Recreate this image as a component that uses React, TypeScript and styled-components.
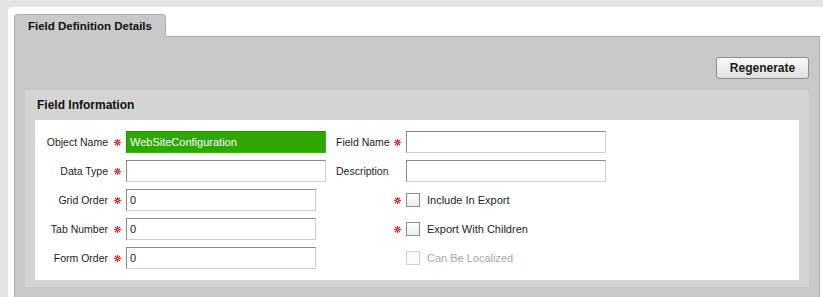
import React from 'react'
import styled, { createGlobalStyle } from 'styled-components'

const GlobalStyle = createGlobalStyle`
  html, body {
    margin: 0;
    padding: 0;
    height: 100%;
    background: #e4e4e4;
  }
  #root {
    height: 100%;
  }
  * {
    box-sizing: border-box;
  }
`

const Page = styled.div`
  height: 100%;
  padding: 7px 0 0 8px;
  font-family: 'Liberation Sans', Arial, sans-serif;
  font-size: 11px;
  color: #1e1e1e;
  overflow: hidden;
`

const Canvas = styled.div`
  height: 100%;
  background: #fff;
  border-top-left-radius: 4px;
  padding: 7px 3px 0 6px;
`

const TabBar = styled.div`
  display: flex;
  position: relative;
  z-index: 1;
  margin-bottom: -1px;
`

const Tab = styled.div`
  width: 152px;
  height: 23px;
  padding-left: 13px;
  line-height: 22px;
  background: #c9c9c9;
  border: 1px solid #a9b1ae;
  border-bottom: none;
  border-radius: 4px 4px 0 0;
  font-weight: bold;
  font-size: 11.5px;
  color: #111;
`

const Panel = styled.div`
  background: #c9c9c9;
  border: 1px solid #a9b1ae;
  border-bottom: none;
  padding: 20px 10px 10px;
`

const Toolbar = styled.div`
  display: flex;
  justify-content: flex-end;
  margin-bottom: 11px;
`

const Button = styled.button`
  width: 93px;
  height: 22px;
  padding: 0;
  border: 1px solid #8c8c8c;
  border-radius: 3px;
  background: linear-gradient(#fbfbfb, #dedede);
  font-family: inherit;
  font-weight: bold;
  font-size: 12px;
  color: #1a1a1a;
`

const Section = styled.div`
  background: #d4d4d4;
  border-radius: 4px 4px 0 0;
  padding: 0 10px 7px;
`

const SectionHeader = styled.div`
  height: 30px;
  line-height: 30px;
  padding-left: 2px;
  font-weight: bold;
  font-size: 12px;
  color: #111;
`

const Content = styled.div`
  background: #fff;
  height: 160px;
  padding: 11px 0;
  display: grid;
  grid-template-columns: 73px 18px 200px 62px 18px 200px;
  grid-auto-rows: 22px;
  row-gap: 7px;
  align-items: center;
`

const Label = styled.div<{ $align?: 'left' | 'right' }>`
  text-align: ${({ $align }) => $align ?? 'right'};
  padding-left: ${({ $align }) => ($align === 'left' ? '10px' : '0')};
  font-size: 10.5px;
  white-space: nowrap;
`

const StarCell = styled.div`
  display: flex;
  justify-content: center;
  align-items: center;
  height: 100%;
`

const Input = styled.input<{ $width?: number; $filled?: boolean }>`
  width: ${({ $width }) => $width ?? 200}px;
  height: 22px;
  padding: 0 3px;
  margin: 0;
  border: 1px solid;
  border-color: ${({ $filled }) =>
    $filled ? '#259000 #3cb810 #3cb810 #259000' : '#8a8a8a #cfcfcf #cfcfcf #8a8a8a'};
  background: ${({ $filled }) => ($filled ? '#2ea800' : '#fff')};
  color: ${({ $filled }) => ($filled ? '#fff' : '#1e1e1e')};
  font-family: inherit;
  font-size: 11px;
  outline: none;
`

const CheckRow = styled.label<{ $disabled?: boolean }>`
  display: flex;
  align-items: center;
  gap: 7px;
  color: ${({ $disabled }) => ($disabled ? '#a8a8a8' : '#1e1e1e')};
  white-space: nowrap;
`

const Box = styled.span<{ $disabled?: boolean }>`
  width: 14px;
  height: 14px;
  border: 1px solid ${({ $disabled }) => ($disabled ? '#d0d0d0' : '#8e8e8e')};
  background: ${({ $disabled }) =>
    $disabled ? '#fafafa' : 'linear-gradient(#ffffff, #ececec)'};
`

const Star = () => (
  <svg width="7" height="7" viewBox="0 0 7 7">
    <g stroke="#d42626" strokeWidth="1.1" strokeLinecap="round">
      <line x1="3.5" y1="0.5" x2="3.5" y2="2.4" />
      <line x1="3.5" y1="4.6" x2="3.5" y2="6.5" />
      <line x1="0.5" y1="3.5" x2="2.4" y2="3.5" />
      <line x1="4.6" y1="3.5" x2="6.5" y2="3.5" />
      <line x1="1.2" y1="1.2" x2="2.5" y2="2.5" />
      <line x1="4.5" y1="4.5" x2="5.8" y2="5.8" />
      <line x1="5.8" y1="1.2" x2="4.5" y2="2.5" />
      <line x1="2.5" y1="4.5" x2="1.2" y2="5.8" />
    </g>
  </svg>
)

const Required = ({ on = true }: { on?: boolean }) => <StarCell>{on && <Star />}</StarCell>

const Check = ({ label, disabled }: { label: string; disabled?: boolean }) => (
  <CheckRow $disabled={disabled}>
    <Box $disabled={disabled} />
    {label}
  </CheckRow>
)

const Empty = styled.div``

export default function App() {
  return (
    <>
      <GlobalStyle />
      <Page>
        <Canvas>
          <TabBar>
            <Tab>Field Definition Details</Tab>
          </TabBar>
          <Panel>
            <Toolbar>
              <Button>Regenerate</Button>
            </Toolbar>
            <Section>
              <SectionHeader>Field Information</SectionHeader>
              <Content>
                <Label>Object Name</Label>
                <Required />
                <Input $filled defaultValue="WebSiteConfiguration" readOnly />
                <Label $align="left">Field Name</Label>
                <Required />
                <Input />

                <Label>Data Type</Label>
                <Required />
                <Input />
                <Label $align="left">Description</Label>
                <Required on={false} />
                <Input />

                <Label>Grid Order</Label>
                <Required />
                <Input $width={190} defaultValue="0" />
                <Empty />
                <Required />
                <Check label="Include In Export" />

                <Label>Tab Number</Label>
                <Required />
                <Input $width={190} defaultValue="0" />
                <Empty />
                <Required />
                <Check label="Export With Children" />

                <Label>Form Order</Label>
                <Required />
                <Input $width={190} defaultValue="0" />
                <Empty />
                <Required on={false} />
                <Check label="Can Be Localized" disabled />
              </Content>
            </Section>
          </Panel>
        </Canvas>
      </Page>
    </>
  )
}
